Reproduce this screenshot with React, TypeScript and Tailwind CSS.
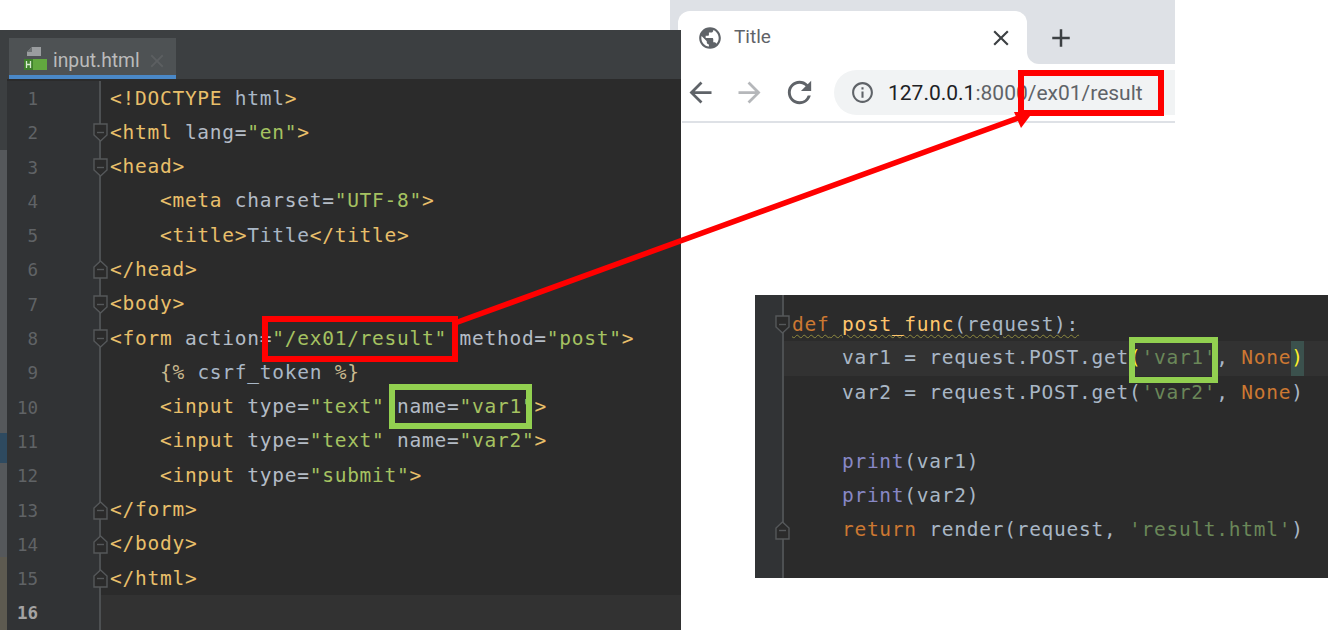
import type { ReactNode } from "react";
import { MdAdd, MdArrowBack, MdArrowForward, MdClose, MdInfoOutline, MdPublic, MdRefresh } from "react-icons/md";

const mono = "font-['DejaVu_Sans_Mono',monospace] text-[19.5px] tracking-[0.74px] whitespace-pre";
const lineNo = "h-full w-[94px] shrink-0 border-r-2 border-[#4d5052] bg-[#313335] pr-[61px] text-right font-['DejaVu_Sans_Mono',monospace] text-[17.5px] leading-[36px]";

// html colours
const T = ({ children }: { children: ReactNode }) => <span className="text-[#e8bf6a]">{children}</span>;
const A = ({ children }: { children: ReactNode }) => <span className="text-[#b4bcc6]">{children}</span>;
const S = ({ children }: { children: ReactNode }) => <span className="text-[#a5c261]">{children}</span>;
// python colours
const K = ({ children }: { children: ReactNode }) => <span className="text-[#cc7832]">{children}</span>;
const P = ({ children }: { children: ReactNode }) => <span className="text-[#6a8759]">{children}</span>;
const B = ({ children }: { children: ReactNode }) => <span className="text-[#8888c6]">{children}</span>;

function Fold({ up, className }: { up?: boolean; className: string }) {
	return (
		<svg viewBox="0 0 15 19" className={`absolute h-[19px] w-[15px] ${className}`} fill="#2b2b2b" stroke="#55585a" strokeWidth="1.4">
			<path d={up ? "M1 18V7l6.500-6 6.500 6v11z" : "M1 1v11l6.500 6 6.500-6V1z"} />
			<path d="M4 9.500h7" />
		</svg>
	);
}

const htmlLines: { fold?: "up" | "down"; code: ReactNode }[] = [
	{ code: <><T>{"<!DOCTYPE"}</T> <span className="text-[#a9b7c6]">html</span><T>{">"}</T></> },
	{ fold: "down", code: <><T>{"<html"}</T> <A>lang=</A><S>"en"</S><T>{">"}</T></> },
	{ fold: "down", code: <T>{"<head>"}</T> },
	{ code: <>    <T>{"<meta"}</T> <A>charset=</A><S>"UTF-8"</S><T>{">"}</T></> },
	{ code: <>    <T>{"<title>"}</T><span className="text-[#a9b7c6]">Title</span><T>{"</title>"}</T></> },
	{ fold: "up", code: <T>{"</head>"}</T> },
	{ fold: "down", code: <T>{"<body>"}</T> },
	{ fold: "down", code: <><T>{"<form"}</T> <A>action=</A><S>"/ex01/result"</S> <A>method=</A><S>"post"</S><T>{">"}</T></> },
	{ code: <>    <span className="text-[#c9b98f]">{"{% "}</span><span className="text-[#a9b7c6]">csrf_token</span><span className="text-[#c9b98f]">{" %}"}</span></> },
	{ code: <>    <T>{"<input"}</T> <A>type=</A><S>"text"</S> <A>name=</A><S>"var1"</S><T>{">"}</T></> },
	{ code: <>    <T>{"<input"}</T> <A>type=</A><S>"text"</S> <A>name=</A><S>"var2"</S><T>{">"}</T></> },
	{ code: <>    <T>{"<input"}</T> <A>type=</A><S>"submit"</S><T>{">"}</T></> },
	{ fold: "up", code: <T>{"</form>"}</T> },
	{ fold: "up", code: <T>{"</body>"}</T> },
	{ fold: "up", code: <T>{"</html>"}</T> },
];

function FileIcon() {
	return (
		<svg viewBox="0 0 24 25" className="h-[25px] w-6 shrink-0">
			<path d="M9 1h9v9H4V6z" fill="#9a9d9f" />
			<path d="M9 1v5H4z" fill="#6c7072" />
			<rect x="1" y="13" width="23" height="11" fill="#62a83f" />
			<rect x="1" y="13" width="9" height="11" fill="#3f7f2c" />
			<path d="M3.500 15v7M7.500 15v7M3.500 18.500h4" stroke="#d8ead0" strokeWidth="1.300" fill="none" />
		</svg>
	);
}

function Browser() {
	return (
		<div className="absolute left-[670px] top-0 h-[123px] w-[505px] bg-white font-['Roboto',sans-serif]">
			<div className="flex h-16 items-end bg-[#dee1e6] pl-2">
				<div className="relative flex h-[53px] w-[349px] items-center rounded-t-xl bg-white pl-[19px] pr-[13px]">
					<MdPublic className="h-[26px] w-[26px] text-[#5f6368]" />
					<span className="ml-[11px] flex-1 text-[19px] text-[#5f6368]">Title</span>
					<MdClose className="h-[26px] w-[26px] text-[#3c4043]" />
					<div className="absolute -right-3 bottom-0 h-3 w-3 bg-white">
						<div className="h-3 w-3 rounded-bl-xl bg-[#dee1e6]" />
					</div>
				</div>
				<MdAdd className="mb-[11px] ml-[19px] h-[30px] w-[30px] text-[#3c4043]" />
			</div>
			<div className="ml-3 flex h-[59px] items-start border-b-2 border-[#dee1e6] pt-[6px]">
				<div className="flex h-[45px] w-[152px] items-center gap-4 pl-[2px]">
					<MdArrowBack className="h-[33px] w-[33px] text-[#5f6368]" />
					<MdArrowForward className="h-[33px] w-[33px] text-[#b5b7ba]" />
					<MdRefresh className="h-[35px] w-[35px] text-[#5f6368]" />
				</div>
				<div className="flex h-[45px] flex-1 items-center rounded-l-[23px] bg-[#f1f3f4] pl-[16px]">
					<MdInfoOutline className="h-[25px] w-[25px] text-[#5f6368]" />
					<span className="ml-[13px] mt-[2px] text-[21px] text-[#202124]">
						127.0.0.1<span className="text-[#5f6368]">:8000/ex01/result</span>
					</span>
				</div>
			</div>
		</div>
	);
}

function HtmlEditor() {
	return (
		<div className="absolute left-0 top-[30px] flex h-[600px] w-[681px] flex-col bg-[#2b2b2b]">
			<div className="flex h-[49px] shrink-0 items-end bg-[#3c3f41] pl-[9px]">
				<div className="flex h-[41px] w-[167px] items-start gap-[6px] border-b-4 border-[#4a88c7] bg-[#4e5254] pl-[14px] pt-[8px] font-['Roboto',sans-serif]">
					<FileIcon />
					<span className="mt-[2px] text-[19.300px] leading-[25px] text-[#bbbbbb]">input.html</span>
					<MdClose className="mt-[4px] h-[22px] w-[22px] text-[#5c5f61]" />
				</div>
			</div>
			<div className="flex min-h-0 flex-1">
				{/* tool window stripe */}
				<div className="flex w-[7px] shrink-0 flex-col">
					<div className="h-[71px] bg-[#3c3f41]" />
					<div className="h-[283px] bg-[#55585b]" />
					<div className="h-[30px] bg-[#2e4a60]" />
					<div className="h-[94px] bg-[#55585b]" />
					<div className="flex-1 bg-[#5d5a50]" />
				</div>
				<div className="min-w-0 flex-1 pt-[2px]">
					{htmlLines.map((line, i) => (
						<div key={i} className="relative flex h-[34.300px] items-center">
							<div className={`${lineNo} text-[#606366]`}>{i + 1}</div>
							<div className={`${mono} pl-[9px]`}>{line.code}</div>
							{line.fold && <Fold up={line.fold === "up"} className="left-[86px] top-[8px]" />}
						</div>
					))}
					<div className="flex h-[35px] bg-[#323232]">
						<div className={`${lineNo} font-bold text-[#a4a3a3]`}>16</div>
					</div>
				</div>
			</div>
		</div>
	);
}

function PythonPanel() {
	const rows: ReactNode[] = [
		<span className="underline decoration-wavy decoration-[#8f8a3f] decoration-1 underline-offset-[3px]">
			<K>def</K> <span className="text-[#ffc66d]">post_func</span>
			<span className="text-[#a9b7c6]">(request):</span>
		</span>,
		<span className="text-[#a9b7c6]">
			{"    var1 = request.POST.get"}
			<span className="text-[#ffef28]">(</span>
			<P>'var1'</P>, <K>None</K>
			<span className="inline-block bg-[#3b514d] leading-[34.300px] text-[#ffef28]">)</span>
		</span>,
		<span className="text-[#a9b7c6]">
			{"    var2 = request.POST.get("}
			<P>'var2'</P>, <K>None</K>)
		</span>,
		"",
		<span className="text-[#a9b7c6]">
			{"    "}
			<B>print</B>(var1)
		</span>,
		<span className="text-[#a9b7c6]">
			{"    "}
			<B>print</B>(var2)
		</span>,
		<span className="text-[#a9b7c6]">
			{"    "}
			<K>return</K> render(request, <P>'result.html'</P>)
		</span>,
	];

	return (
		<div className="absolute left-[755px] top-[295px] flex h-[283px] w-[573px] bg-[#2b2b2b]">
			<div className="w-[29px] shrink-0 border-r-2 border-[#4d5052] bg-[#313335]" />
			<div className="min-w-0 flex-1 pt-3">
				{rows.map((row, i) => (
					<div key={i} className={`relative flex h-[34.300px] items-center ${i === 1 ? "bg-[#323232]" : ""}`}>
						<div className={`${mono} pl-[8px]`}>{row}</div>
						{i === 0 && <Fold className="left-[-9px] top-[8px]" />}
						{i === 6 && <Fold up className="left-[-9px] top-[8px]" />}
					</div>
				))}
			</div>
		</div>
	);
}

export default function App() {
	return (
		<div className="relative h-[630px] w-[1328px] overflow-hidden bg-white">
			<Browser />
			<HtmlEditor />
			<PythonPanel />

			{/* annotations over the screenshots */}
			<svg viewBox="0 0 1328 630" className="pointer-events-none absolute left-0 top-0 h-[630px] w-[1328px]">
				<path d="M455 323L1018 118" stroke="#ff0000" strokeWidth="5.500" fill="none" />
				<path d="M1033 112L1014 112L1021 128z" fill="#ff0000" />
			</svg>
			<div className="absolute left-[262px] top-[316px] h-[46px] w-[196px] border-[6px] border-[#ff0000]" />
			<div className="absolute left-[1018px] top-[70px] h-[46px] w-[146px] border-[6px] border-[#ff0000]" />
			<div className="absolute left-[389px] top-[384px] h-[45px] w-[143px] border-[6px] border-[#92d050]" />
			<div className="absolute left-[1129px] top-[337px] h-[46px] w-[89px] border-[6px] border-[#92d050]" />
		</div>
	);
}
